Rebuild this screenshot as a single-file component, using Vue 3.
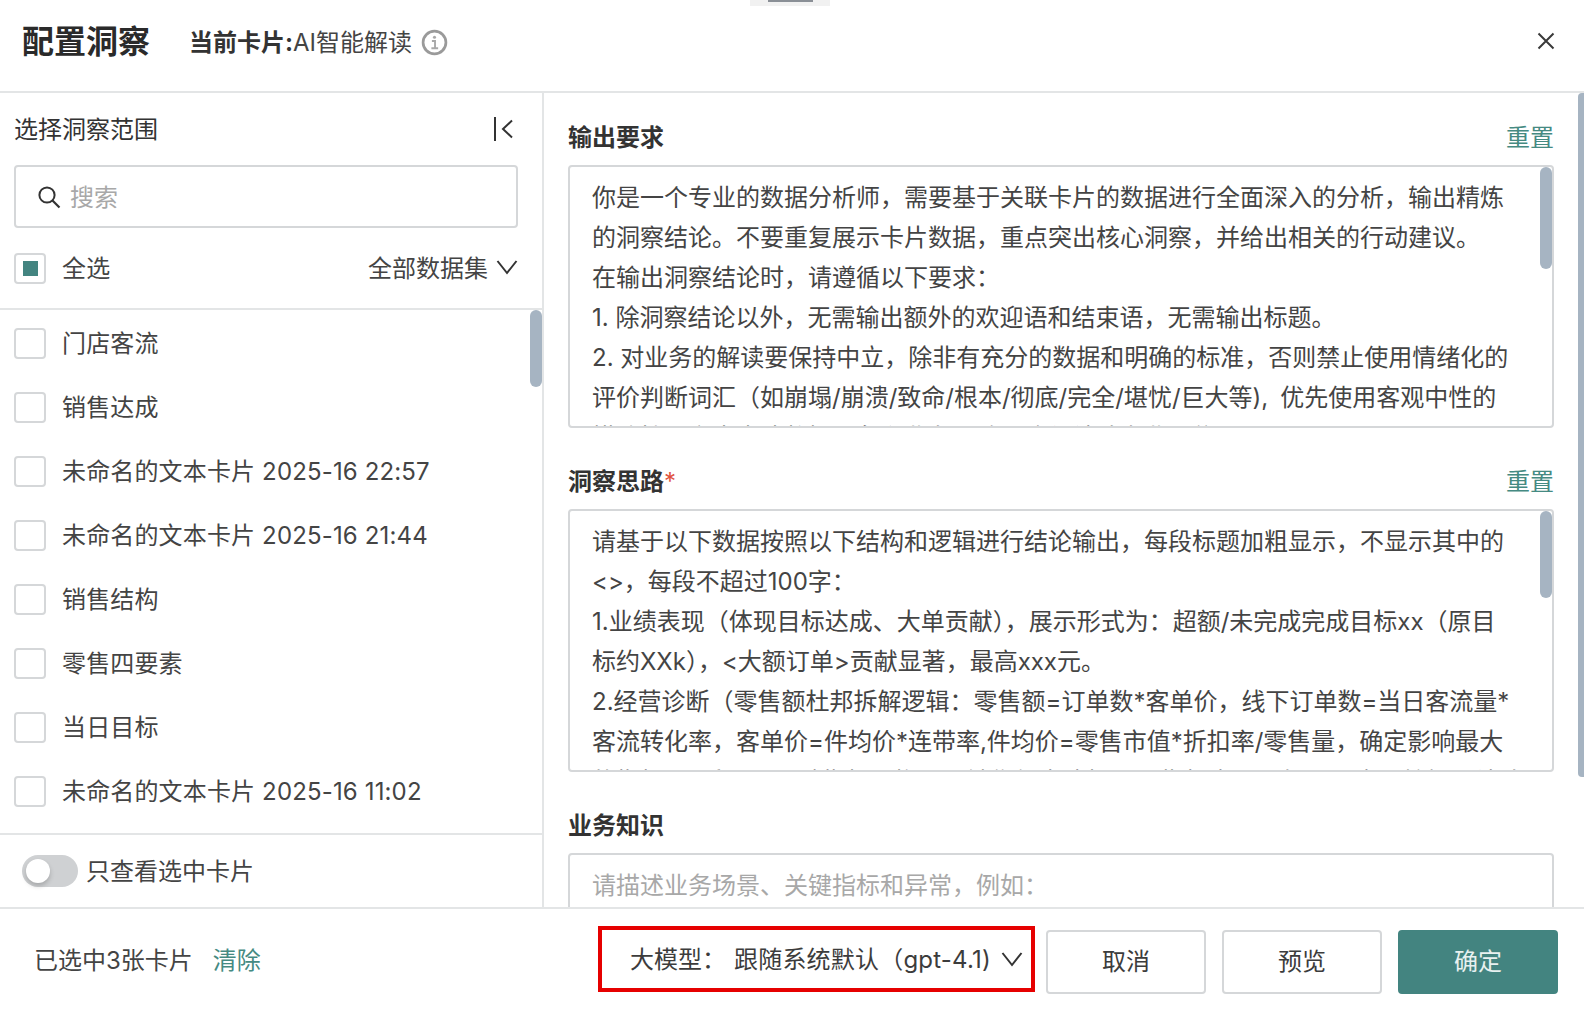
<script setup>
const cards = ['门店客流','销售达成','未命名的文本卡片 2025-16 22:57','未命名的文本卡片 2025-16 21:44','销售结构','零售四要素','当日目标','未命名的文本卡片 2025-16 11:02'];
const sections = [
  { title:'输出要求', required:false, reset:true, thumb:102, lines:[
    '你是一个专业的数据分析师，需要基于关联卡片的数据进行全面深入的分析，输出精炼',
    '的洞察结论。不要重复展示卡片数据，重点突出核心洞察，并给出相关的行动建议。',
    '在输出洞察结论时，请遵循以下要求：',
    '1. 除洞察结论以外，无需输出额外的欢迎语和结束语，无需输出标题。',
    '2. 对业务的解读要保持中立，除非有充分的数据和明确的标准，否则禁止使用情绪化的',
    '评价判断词汇（如崩塌/崩溃/致命/根本/彻底/完全/堪忧/巨大等),\u2002优先使用客观中性的',
    '描述性语言来表达数据现象和业务影响，确保结论专业可信。'] },
  { title:'洞察思路', required:true, reset:true, thumb:87, lines:[
    '请基于以下数据按照以下结构和逻辑进行结论输出，每段标题加粗显示，不显示其中的',
    '<>，每段不超过100字：',
    '1.业绩表现（体现目标达成、大单贡献），展示形式为：超额/未完成完成目标xx（原目',
    '标约XXk），<大额订单>贡献显著，最高xxx元。',
    '2.经营诊断（零售额杜邦拆解逻辑：零售额=订单数*客单价，线下订单数=当日客流量*',
    '客流转化率，客单价=件均价*连带率,件均价=零售市值*折扣率/零售量，确定影响最大',
    '的指标）：受xx（下跌指标）拖累，销售额未达标，xx指标表现一般，xx表现较好，结论'] },
  { title:'业务知识', required:false, reset:false, thumb:0, placeholder:true, lines:['请描述业务场景、关键指标和异常，例如：'] }
];
</script>

<template>
  <div class="page">
    <div class="grab"><i></i></div>
    <header class="header">
      <h1>配置洞察</h1>
      <div class="sub"><b>当前卡片:</b><span>AI智能解读</span></div>
      <svg class="info" width="27" height="27" viewBox="0 0 26 26" fill="none">
        <circle cx="13" cy="13" r="11" stroke="#9a9a9a" stroke-width="2.6"/>
        <circle cx="13" cy="8" r="1.5" fill="#a8a8a8"/>
        <path d="M10.5 11.5h3v7M10 18.5h6.5" stroke="#a8a8a8" stroke-width="1.8"/>
      </svg>
      <svg class="close" width="20" height="20" viewBox="0 0 20 20" fill="none">
        <path d="M2.5 2.5l15 15M17.5 2.5l-15 15" stroke="#3a3a3a" stroke-width="2"/>
      </svg>
    </header>

    <main class="body">
      <aside class="left">
        <div class="left-title">
          <span>选择洞察范围</span>
          <svg class="collapse" width="20" height="26" viewBox="0 0 20 26" fill="none">
            <path d="M1 1v24" stroke="#333" stroke-width="2"/>
            <path d="M18 4.5L9 13l9 8.5" stroke="#333" stroke-width="2"/>
          </svg>
        </div>
        <div class="search">
          <svg width="24" height="24" viewBox="0 0 24 24" fill="none">
            <circle cx="10" cy="10" r="7.6" stroke="#333" stroke-width="2"/>
            <path d="M15.5 15.5l7 7" stroke="#333" stroke-width="2.2"/>
          </svg>
          <span>搜索</span>
        </div>
        <div class="all">
          <span class="check on"><i></i></span>
          <span class="check-label">全选</span>
          <span class="all-filter">全部数据集</span>
          <svg class="chev" width="22" height="16" viewBox="0 0 22 16" fill="none">
            <path d="M1.5 2l9.5 12 9.5-12" stroke="#333" stroke-width="2"/>
          </svg>
        </div>
        <div class="list">
          <div v-for="c in cards" :key="c" class="item">
            <span class="check"></span>
            <span class="check-label">{{ c }}</span>
          </div>
          <div class="left-thumb"></div>
        </div>
        <div class="only">
          <span class="toggle"><i></i></span>
          <span class="only-text">只查看选中卡片</span>
        </div>
      </aside>

      <section class="right">
        <div v-for="s in sections" :key="s.title" class="section">
          <div class="sec-head">
            <h2>{{ s.title }}<em v-if="s.required">*</em></h2>
            <a v-if="s.reset">重置</a>
          </div>
          <div class="box" :class="{ ph: s.placeholder }">
            <p v-for="l in s.lines" :key="l">{{ l }}</p>
            <div v-if="s.thumb" class="thumb" :style="{ height: s.thumb + 'px' }"></div>
          </div>
        </div>
        <div class="page-thumb"></div>
      </section>
    </main>

    <footer class="footer">
      <span class="count">已选中3张卡片</span>
      <a class="clear">清除</a>
      <div class="model">
        <span>大模型：</span>
        <span class="model-val">跟随系统默认（gpt-4.1)</span>
        <svg width="22" height="16" viewBox="0 0 22 16" fill="none">
          <path d="M1.5 2l9.5 12 9.5-12" stroke="#333" stroke-width="2"/>
        </svg>
      </div>
      <button class="btn">取消</button>
      <button class="btn">预览</button>
      <button class="btn primary">确定</button>
    </footer>
  </div>
</template>

<style>
html, body { margin: 0; background: #fff; overflow: hidden; }
</style>

<style scoped>
.page {
  position: relative;
  width: 1584px;
  height: 1010px;
  display: flex;
  flex-direction: column;
  overflow: hidden;
  background: #fff;
  color: #3c3c3c;
  font-family: "Inter", "Noto Sans CJK SC", sans-serif;
  font-size: 24px;
}
.grab {
  position: absolute;
  left: 750px;
  top: 0;
  width: 80px;
  height: 6px;
  background: #f1f1f1;
  display: flex;
  justify-content: center;
}
.grab i { width: 45px; height: 2px; background: #8a8f96; }
.header {
  height: 91px;
  flex: none;
  border-bottom: 2px solid #e3e5e6;
  display: flex;
  align-items: center;
  padding: 0 0 0 22px;
}
h1 {
  margin: 0 0 7px;
  font-size: 32px;
  font-weight: 700;
  color: #2a2a2a;
  line-height: 44px;
}
.sub { margin: 0 0 6px 39px; line-height: 36px; white-space: nowrap; }
.sub b { font-weight: 700; color: #333; }
.sub span { color: #444; }
.info { margin: 0 0 7px 9px; }
.close { margin: 0 28px 9px auto; }
.body { flex: 1; min-height: 0; display: flex; }
.left {
  width: 542px;
  flex: none;
  border-right: 2px solid #e3e5e6;
  display: flex;
  flex-direction: column;
}
.left-title {
  height: 72px;
  flex: none;
  box-sizing: border-box;
  padding: 0 28px 3px 14px;
  display: flex;
  align-items: center;
  justify-content: space-between;
  color: #333;
}
.collapse { margin-top: 2px; }
.search {
  margin: 0 24px 0 14px;
  height: 63px;
  flex: none;
  box-sizing: border-box;
  border: 2px solid #d5d7d9;
  border-radius: 4px;
  display: flex;
  align-items: center;
  padding: 0 0 3px 21px;
  gap: 9px;
  color: #a8a8a8;
}
.search svg { margin-top: 3px; }
.all {
  height: 82px;
  flex: none;
  box-sizing: border-box;
  padding: 4px 24px 8px 14px;
  display: flex;
  align-items: center;
  border-bottom: 2px solid #e3e5e6;
}
.all-filter { margin-left: auto; margin-right: 8px; color: #444; }
.chev { margin-top: 2px; }
.check {
  width: 32px;
  height: 31px;
  flex: none;
  box-sizing: border-box;
  border: 2px solid #d5d7d9;
  border-radius: 4px;
  background: #fff;
  display: flex;
  align-items: center;
  justify-content: center;
  margin-top: 3px;
}
.all .check { margin-top: 4px; }
.check i { width: 15px; height: 15px; background: #438480; }
.check-label { margin-left: 16px; white-space: nowrap; letter-spacing: 0.15px; color: #444; margin-bottom: 1px; }
.all .check-label { margin-bottom: 0; }
.list {
  position: relative;
  height: 523px;
  flex: none;
  box-sizing: border-box;
  padding: 0 0 0 14px;
  overflow: hidden;
}
.item { height: 64px; display: flex; align-items: center; }
.left-thumb {
  position: absolute;
  right: 0;
  top: 0;
  width: 12px;
  height: 77px;
  border-radius: 6px;
  background: #a6b4c2;
}
.only {
  flex: 1;
  border-top: 2px solid #e3e5e6;
  display: flex;
  align-items: center;
  padding: 0 0 0 22px;
  gap: 8px;
  color: #444;
}
.only-text { margin-bottom: 3px; }
.toggle {
  width: 56px;
  height: 32px;
  border-radius: 16px;
  background: #cfd1d3;
  display: flex;
  align-items: center;
  padding-left: 4px;
  box-sizing: border-box;
}
.toggle i {
  width: 24px;
  height: 24px;
  border-radius: 50%;
  background: #fff;
  box-shadow: 0 3px 5px rgba(0,0,0,.2);
}
.right {
  position: relative;
  flex: 1;
  min-width: 0;
  padding: 23px 30px 0 24px;
  display: flex;
  flex-direction: column;
  gap: 32px;
  overflow: hidden;
}
.section { flex: none; }
.sec-head {
  height: 44px;
  margin-bottom: 5px;
  display: flex;
  align-items: center;
  justify-content: space-between;
}
h2 { margin: 0; font-size: 24px; font-weight: 700; color: #333; line-height: 44px; }
h2 em { font-style: normal; font-weight: 400; color: #e0533f; }
.sec-head a { color: #458a82; margin-bottom: 6px; }
.box {
  position: relative;
  height: 263px;
  box-sizing: border-box;
  border: 2px solid #d5d7d9;
  border-radius: 4px;
  padding: 11px 0 0 22px;
  overflow: hidden;
}
.box p { margin: 0; height: 40px; line-height: 40px; white-space: nowrap; color: #444; }
.box.ph p { color: #a8a8a8; }
.thumb {
  position: absolute;
  right: 0;
  top: 0;
  width: 12px;
  border-radius: 6px;
  background: #a6b4c2;
}
.page-thumb {
  position: absolute;
  right: 0;
  top: 0;
  width: 6px;
  height: 684px;
  border-radius: 4px 0 0 4px;
  background: #a6b4c2;
}
.footer {
  height: 101px;
  flex: none;
  border-top: 2px solid #e3e5e6;
  display: flex;
  align-items: center;
  padding: 0 26px 0 34px;
}
.count { color: #444; white-space: nowrap; margin-bottom: 3px; }
.clear { margin-left: 20px; color: #458a82; margin-bottom: 3px; }
.model {
  margin-left: auto;
  margin-right: 11px;
  width: 437px;
  height: 66px;
  margin-bottom: 2px;
  box-sizing: border-box;
  border: 4px solid #e60000;
  display: flex;
  align-items: center;
  padding: 0 0 2px 28px;
  white-space: nowrap;
  color: #3c3c3c;
}
.model-val { margin-left: 8px; margin-right: 10px; letter-spacing: 0.2px; }
.model svg { margin-top: 2px; }
.btn {
  width: 160px;
  height: 64px;
  margin-top: 4px;
  box-sizing: border-box;
  border: 2px solid #d5d7d9;
  border-radius: 4px;
  background: #fff;
  font: inherit;
  color: #3c3c3c;
  padding: 0 0 4px;
}
.btn + .btn { margin-left: 16px; }
.btn.primary { background: #438480; border-color: #438480; color: #e8f1f0; }
</style>
